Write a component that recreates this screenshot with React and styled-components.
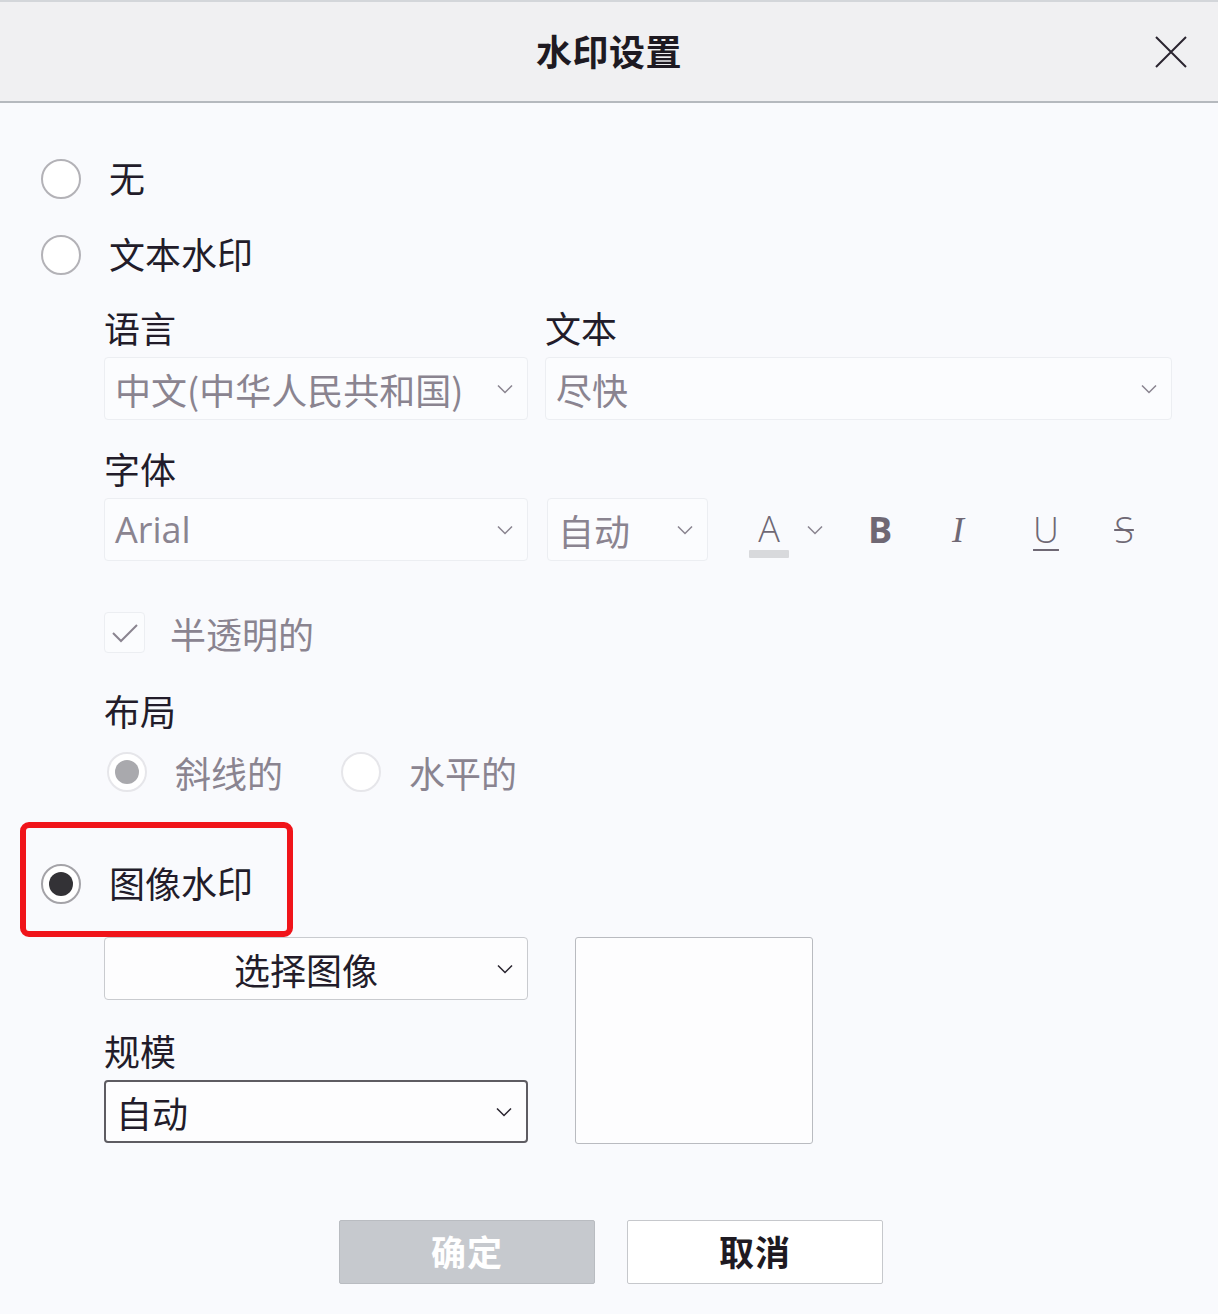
import React from "react";
import styled, { createGlobalStyle } from "styled-components";

const Global = createGlobalStyle`
  html, body { margin: 0; padding: 0; }
  body {
    background: #f9fafd;
    font-family: "Noto Sans CJK SC", "Noto Sans", sans-serif;
    color: #221c2a;
  }
`;

const Dialog = styled.div`
  width: 1218px;
  height: 1314px;
  display: flex;
  flex-direction: column;
  background: #f9fafd;
  box-sizing: border-box;
`;

const Header = styled.div`
  height: 103px;
  box-sizing: border-box;
  border-top: 2px solid #d3d6da;
  border-bottom: 2px solid #b5b9be;
  background: #f0f0f2;
  display: flex;
  align-items: center;
  justify-content: center;
  position: relative;
`;

const Title = styled.div`
  font-size: 36px;
  line-height: 44px;
  font-weight: 700;
  letter-spacing: 0.5px;
  color: #1e1a22;
  margin-top: -3px;
`;

const Close = styled.button`
  position: absolute;
  right: 30px;
  top: 33px;
  width: 34px;
  height: 34px;
  padding: 0;
  border: 0;
  background: transparent;
  display: flex;
`;

const Body = styled.div`
  flex: 1;
  display: flex;
  flex-direction: column;
  padding: 51px 0 0 41px;
`;

const RadioRow = styled.label`
  display: flex;
  align-items: center;
  gap: 28px;
  height: 50px;
  margin-top: ${(p) => p.$mt || 0}px;
  font-size: 36px;
  color: ${(p) => (p.$muted ? "#8a8490" : "#221c2a")};
`;

const RadioText = styled.span`
  margin-top: -4px;
`;

const Circle = styled.span`
  width: 40px;
  height: 40px;
  box-sizing: border-box;
  border-radius: 50%;
  border: 2px solid ${(p) => p.$border || "#b3b2b7"};
  background: #fff;
  display: flex;
  align-items: center;
  justify-content: center;
  flex-shrink: 0;
`;

const Dot = styled.span`
  width: 24px;
  height: 24px;
  border-radius: 50%;
  background: ${(p) => p.$color};
`;

const Section = styled.div`
  display: flex;
  flex-direction: column;
  padding-left: 63px;
  margin-top: ${(p) => p.$mt || 0}px;
`;

const FieldRow = styled.div`
  display: flex;
  align-items: flex-end;
  gap: ${(p) => p.$gap || 17}px;
  margin-top: ${(p) => p.$mt || 0}px;
`;

const Field = styled.div`
  display: flex;
  flex-direction: column;
  gap: 10px;
  width: ${(p) => p.$w}px;
`;

const Label = styled.div`
  font-size: 36px;
  line-height: 40px;
  height: 40px;
  color: #221c2a;
  margin-top: ${(p) => p.$mt || 0}px;
`;

const Select = styled.div`
  height: 63px;
  width: ${(p) => (p.$w ? p.$w + "px" : "auto")};
  box-sizing: border-box;
  border: ${(p) => (p.$strong ? "2px solid #5e5c62" : p.$mid ? "1.5px solid #c9cbcf" : "1.5px solid #eceef2")};
  border-radius: 4px;
  background: ${(p) => (p.$mid || p.$strong ? "#fdfdfe" : "#fbfcfe")};
  display: flex;
  align-items: center;
  padding: 0 14px 0 10px;
  font-size: 36px;
  color: ${(p) => (p.$muted ? "#8a8490" : "#221c2a")};
  font-family: ${(p) => (p.$latin ? '"Open Sans", "Noto Sans", sans-serif' : "inherit")};
`;

const SelectText = styled.span`
  flex: 1;
  text-align: ${(p) => (p.$center ? "center" : "left")};
  white-space: nowrap;
`;

const Chevron = ({ color = "#8a8490", w = 2 }) => (
  <svg width="16" height="10" viewBox="0 0 16 10" style={{ flexShrink: 0 }}>
    <path d="M1 1.5 L8 8.5 L15 1.5" fill="none" stroke={color} strokeWidth={w / 1.3} />
  </svg>
);

const Tools = styled.div`
  display: flex;
  align-items: center;
  height: 63px;
  margin-left: 21px;
`;

const Tool = styled.span`
  width: ${(p) => p.$w || 78}px;
  display: flex;
  justify-content: center;
  align-items: center;
  font-size: 36px;
  color: #6f6874;
  font-family: ${(p) => (p.$serif ? '"Liberation Serif", serif' : '"Open Sans", "Liberation Sans", sans-serif')};
  font-weight: ${(p) => (p.$bold ? 700 : 300)};
  font-style: ${(p) => (p.$italic ? "italic" : "normal")};
  text-decoration: ${(p) => p.$deco || "none"};
  text-decoration-thickness: 2px;
  text-underline-offset: 6px;
`;

const ColorA = styled.span`
  display: flex;
  flex-direction: column;
  align-items: center;
  width: 42px;
  font-family: "Open Sans", sans-serif;
  font-weight: 300;
  font-size: 36px;
  line-height: 40px;
  color: #6f6874;
  margin-top: 8px;
`;

const ColorBar = styled.span`
  width: 40px;
  height: 8px;
  background: #d8d9dc;
  border-radius: 1px;
  margin-top: 1px;
`;

const CheckRow = styled.div`
  display: flex;
  align-items: center;
  gap: 25px;
  height: 41px;
  margin-top: 51px;
  font-size: 36px;
  color: #8a8490;
`;

const Box = styled.span`
  width: 41px;
  height: 41px;
  box-sizing: border-box;
  border: 1.5px solid #eceef2;
  border-radius: 4px;
  background: #fbfcfe;
  display: flex;
  align-items: center;
  justify-content: center;
`;

const InlineRadios = styled.div`
  display: flex;
  align-items: center;
  margin-top: 22px;
  padding-left: 3px;
`;

const InlineRadio = styled.label`
  display: flex;
  align-items: center;
  gap: 28px;
  height: 40px;
  width: ${(p) => p.$w}px;
  font-size: 36px;
  color: #8a8490;
`;

const Highlight = styled.div`
  margin: 30px 0 0 -21px;
  width: 273px;
  height: 115px;
  box-sizing: border-box;
  border: 6px solid #f0141a;
  border-radius: 9px;
  display: flex;
  align-items: center;
  padding-left: 15px;
  padding-top: 8px;
  flex-shrink: 0;
`;

const ImageGrid = styled.div`
  display: flex;
  gap: 47px;
  padding-left: 63px;
`;

const Column = styled.div`
  display: flex;
  flex-direction: column;
  width: 424px;
`;

const Preview = styled.div`
  width: 238px;
  height: 207px;
  box-sizing: border-box;
  border: 1.5px solid #b9bbc0;
  border-radius: 3px;
  background: #fdfdfe;
`;

const Buttons = styled.div`
  display: flex;
  justify-content: center;
  gap: 32px;
  margin: 76px 0 0 -41px;
  padding-left: 4px;
`;

const Button = styled.button`
  width: 256px;
  height: 64px;
  box-sizing: border-box;
  border-radius: 2px;
  border: 1.5px solid ${(p) => (p.$primary ? "#b9bcc1" : "#c6c8cc")};
  background: ${(p) => (p.$primary ? "#c6c9ce" : "#ffffff")};
  color: ${(p) => (p.$primary ? "#ffffff" : "#1e1a22")};
  font-family: "Noto Sans CJK SC", sans-serif;
  font-size: 35px;
  font-weight: 700;
  letter-spacing: 1px;
  padding: 0 0 4px;
`;

export default function App() {
  return (
    <>
      <Global />
      <Dialog>
        <Header>
          <Title>水印设置</Title>
          <Close aria-label="关闭">
            <svg width="34" height="34" viewBox="0 0 34 34">
              <path d="M2 2 L32 32 M32 2 L2 32" stroke="#2a2530" strokeWidth="2" fill="none" />
            </svg>
          </Close>
        </Header>
        <Body>
          <RadioRow>
            <Circle />
            <RadioText>无</RadioText>
          </RadioRow>
          <RadioRow $mt={26}>
            <Circle />
            <RadioText>文本水印</RadioText>
          </RadioRow>

          <Section $mt={27}>
            <FieldRow>
              <Field $w={424}>
                <Label>语言</Label>
                <Select $muted>
                  <SelectText>中文(中华人民共和国)</SelectText>
                  <Chevron />
                </Select>
              </Field>
              <Field $w={627}>
                <Label>文本</Label>
                <Select $muted>
                  <SelectText>尽快</SelectText>
                  <Chevron />
                </Select>
              </Field>
            </FieldRow>
            <FieldRow $mt={28} $gap={19}>
              <Field $w={424}>
                <Label>字体</Label>
                <Select $muted $latin>
                  <SelectText>Arial</SelectText>
                  <Chevron />
                </Select>
              </Field>
              <Select $muted $w={161}>
                <SelectText>自动</SelectText>
                <Chevron />
              </Select>
              <Tools>
                <ColorA>
                  A
                  <ColorBar />
                </ColorA>
                <Tool $w={50}>
                  <Chevron />
                </Tool>
                <Tool $w={80} $bold>B</Tool>
                <Tool $w={76} $serif $italic>I</Tool>
                <Tool $w={100} $deco="underline">U</Tool>
                <Tool $w={56} $deco="line-through">S</Tool>
              </Tools>
            </FieldRow>

            <CheckRow>
              <Box>
                <svg width="28" height="22" viewBox="0 0 28 22">
                  <path d="M2 11 L10 19 L26 3" fill="none" stroke="#8a8490" strokeWidth="2" />
                </svg>
              </Box>
              <span>半透明的</span>
            </CheckRow>

            <Label $mt={37}>布局</Label>
            <InlineRadios>
              <InlineRadio $w={234}>
                <Circle $border="#e6e6ea">
                  <Dot $color="#a9a9ad" />
                </Circle>
                <span>斜线的</span>
              </InlineRadio>
              <InlineRadio $w={200}>
                <Circle $border="#e6e6ea" />
                <span>水平的</span>
              </InlineRadio>
            </InlineRadios>
          </Section>

          <Highlight>
            <RadioRow>
              <Circle $border="#a4a3a8">
                <Dot $color="#333236" />
              </Circle>
              <RadioText>图像水印</RadioText>
            </RadioRow>
          </Highlight>

          <ImageGrid>
            <Column>
              <Select $mid>
                <SelectText $center>选择图像</SelectText>
                <Chevron color="#2a2530" />
              </Select>
              <Label $mt={30}>规模</Label>
              <Select $strong style={{ marginTop: 10 }}>
                <SelectText>自动</SelectText>
                <Chevron color="#2a2530" />
              </Select>
            </Column>
            <Preview />
          </ImageGrid>

          <Buttons>
            <Button $primary>确定</Button>
            <Button>取消</Button>
          </Buttons>
        </Body>
      </Dialog>
    </>
  );
}
